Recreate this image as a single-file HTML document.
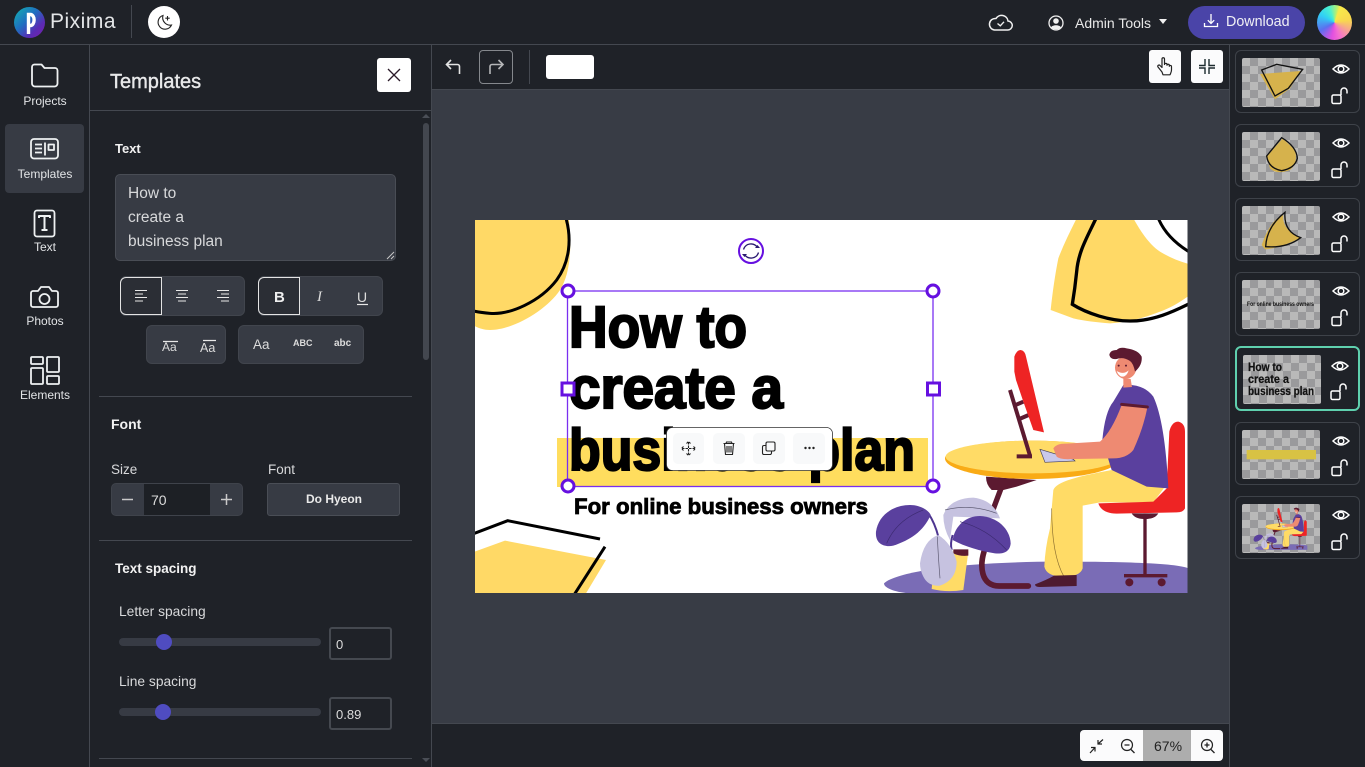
<!DOCTYPE html>
<html lang="en"><head><meta charset="utf-8"><title>Pixima</title>
<style>
*{box-sizing:border-box}
html,body{margin:0;padding:0;width:1365px;height:767px;overflow:hidden;background:#1f2228;font-family:"Liberation Sans",sans-serif;color:#e6e6e6}
.a{position:absolute}
.t{position:absolute;white-space:nowrap;line-height:1}
.l{background:#444850;position:absolute}
.b{font-weight:bold;font-size:13px;color:#f2f2f2}
.n{font-size:12px;color:#e2e4e6;transform:translateX(-50%)}
.g{position:absolute;background:#373b44;border:1px solid #41454d;border-radius:6px}
.act{position:absolute;border:1.5px solid #e4e4e4;background:#2b2e35;border-radius:6px 0 0 6px;border-right-width:1.5px}
.card{position:absolute;left:1235px;width:125px;height:63px;border:1px solid #3e4249;border-radius:6px}
.th{position:absolute;left:6px;top:7px;width:78px;height:49px;border-radius:2px;background-color:#b9b9b9;background-image:linear-gradient(45deg,#9a9a9c 25%,transparent 25%,transparent 75%,#9a9a9c 75%),linear-gradient(45deg,#9a9a9c 25%,transparent 25%,transparent 75%,#9a9a9c 75%);background-size:16px 16px;background-position:0 0,8px 8px}
svg{position:absolute;overflow:visible}
</style></head><body>
<!-- regions -->
<div class="a" style="left:432px;top:90px;width:797px;height:633px;background:#383c45"></div>
<div class="l" style="left:0;top:44px;width:1365px;height:1px"></div>
<div class="l" style="left:89px;top:45px;width:1px;height:722px"></div>
<div class="l" style="left:431px;top:45px;width:1px;height:722px"></div>
<div class="l" style="left:1229px;top:45px;width:1px;height:722px"></div>
<div class="l" style="left:432px;top:89px;width:797px;height:1px"></div>
<div class="l" style="left:432px;top:723px;width:797px;height:1px"></div>
<div class="l" style="left:90px;top:110px;width:341px;height:1px"></div>

<!-- top bar -->
<div class="a" style="left:14px;top:7px;width:31px;height:31px;border-radius:50%;background:linear-gradient(135deg,#12b5b0 0%,#1f6fc0 42%,#5a2bb5 72%,#7b1fa8 100%)"></div>
<svg style="left:0;top:0" width="200" height="44"><path d="M28.500 34V14.500h2a3.600 5.500 0 0 1 0 11h-2" fill="none" stroke="#fff" stroke-width="3.400"/></svg>
<div class="t" style="left:50px;top:11px;font-size:21px;letter-spacing:.5px;color:#e4e6e8">Pixima</div>
<div class="l" style="left:131px;top:5px;width:1px;height:33px"></div>
<div class="a" style="left:148px;top:6px;width:32px;height:32px;border-radius:50%;background:#fff"></div>
<svg style="left:148px;top:6px" width="32" height="32" fill="none" stroke="#222" stroke-width="1.100"><path d="M15 9.500a7 7 0 1 0 8.500 9.500 7.500 7.500 0 0 1-8.500-9.500z"/><path d="M19.500 10v4.500M17.300 12.200h4.400" stroke-width="1.100"/></svg>

<svg style="left:985px;top:10px" width="32" height="26" fill="none" stroke="#f0f0f0" stroke-width="1.500"><path d="M9.500 20h13a4.500 4.500 0 0 0 .5-9A6.500 6.500 0 0 0 11 8.500 5.500 5.500 0 0 0 9.500 20z"/><path d="M12.500 13.500l2.800 2.300 3.700-4" stroke-width="1.400"/></svg>
<svg style="left:1048px;top:15px" width="16" height="16"><circle cx="8" cy="8" r="7" fill="#1f2228" stroke="#f0f0f0" stroke-width="1.300"/><circle cx="8" cy="6" r="2.800" fill="#f0f0f0"/><path d="M3 12.500c1-3 9-3 10 0-2 2.500-8 2.500-10 0z" fill="#f0f0f0"/></svg>
<div class="t" style="left:1075px;top:16px;font-size:14px;color:#e8e8e8">Admin Tools</div>
<svg style="left:1158px;top:19px" width="10" height="6"><path d="M1 0h8L5 5z" fill="#f0f0f0"/></svg>
<div class="a" style="left:1188px;top:6px;width:117px;height:33px;border-radius:17px;background:#4a44a8"></div>
<svg style="left:1203px;top:13px" width="16" height="16" fill="none" stroke="#fff" stroke-width="1.300"><path d="M8 1v9M4.800 7.200L8 10.400l3.200-3.200M1.500 10v3.500h13V10"/></svg>
<div class="t" style="left:1226px;top:15px;font-size:14.300px;color:#f0f0f5">Download</div>
<div class="a" style="left:1317px;top:5px;width:35px;height:35px;border-radius:50%;background:conic-gradient(from 20deg,#f7e94a 0deg,#f8d84e 60deg,#f56fd0 140deg,#e24fe0 170deg,#5b6ff0 220deg,#30d0f5 280deg,#4af0d0 320deg,#b8f070 350deg,#f7e94a 360deg)"></div>

<!-- left rail -->
<div class="a" style="left:5px;top:124px;width:79px;height:69px;border-radius:4px;background:#373b44"></div>
<svg style="left:0;top:45px" width="90" height="360" fill="none" stroke="#eef1f2" stroke-width="1.800" stroke-linejoin="round">
<path d="M32 22a2.500 2.500 0 0 1 2.500-2.500h7l3 3.500h10.500a2.500 2.500 0 0 1 2.500 2.500v13a3 3 0 0 1-3 3H35a3 3 0 0 1-3-3z"/>
<rect x="31" y="94" width="27" height="19.500" rx="3"/><path d="M35 99.500h7M35 103.500h7M35 107.500h7M45 97.500v13"/><rect x="48.500" y="99.500" width="5.500" height="5.500"/>
<rect x="34.500" y="165.500" width="20" height="26" rx="2.500"/><path d="M39 173v-2h11v2M44.500 171v14M41.500 185h6" stroke-width="2"/>
<path d="M31 248a2 2 0 0 1 2-2h5l3-4h8l3 4h4a2 2 0 0 1 2 2v12a2 2 0 0 1-2 2H33a2 2 0 0 1-2-2z"/><circle cx="44.500" cy="254" r="5"/>
<rect x="31" y="312" width="12" height="7" rx="1"/><rect x="31" y="323" width="12" height="16" rx="1"/><rect x="47" y="312" width="12" height="15" rx="1"/><rect x="47" y="331" width="12" height="8" rx="1"/>
</svg>
<div class="t n" style="left:45px;top:95px">Projects</div>
<div class="t n" style="left:45px;top:168px">Templates</div>
<div class="t n" style="left:45px;top:241px">Text</div>
<div class="t n" style="left:45px;top:315px">Photos</div>
<div class="t n" style="left:45px;top:389px">Elements</div>

<!-- panel -->
<div class="t" style="left:110px;top:72px;font-size:20px;color:#e8e9ea;-webkit-text-stroke:.4px #e8e9ea">Templates</div>
<div class="a" style="left:377px;top:58px;width:34px;height:34px;background:#fff;border-radius:3px"></div>
<svg style="left:377px;top:58px" width="34" height="34"><path d="M11 11l12 12M23 11L11 23" stroke="#2a1a28" stroke-width="1.300"/></svg>
<div class="t b" style="left:115px;top:142px">Text</div>
<div class="a" style="left:115px;top:174px;width:281px;height:87px;background:#373b44;border:1px solid #494d55;border-radius:5px"></div>
<div class="t" style="left:128px;top:186px;font-size:15.500px;color:#d8d9db">How to</div>
<div class="t" style="left:128px;top:210px;font-size:15.500px;color:#d8d9db">create a</div>
<div class="t" style="left:128px;top:234px;font-size:15.500px;color:#d8d9db">business plan</div>
<svg style="left:385px;top:250px" width="10" height="10"><path d="M2 9l7-7M6 9l3-3" stroke="#c8c8c8" stroke-width="1"/></svg>
<!-- button groups -->
<div class="g" style="left:120px;top:276px;width:125px;height:40px"></div>
<div class="act" style="left:120px;top:277px;width:42px;height:38px"></div>
<div class="g" style="left:258px;top:276px;width:125px;height:40px"></div>
<div class="act" style="left:258px;top:277px;width:42px;height:38px"></div>
<div class="g" style="left:146px;top:325px;width:80px;height:39px"></div>
<div class="g" style="left:238px;top:325px;width:126px;height:39px"></div>
<svg style="left:0;top:0" width="431" height="400" fill="none" stroke="#e8e8e8" stroke-width="1">
<path d="M135 290.500h12M135 294h8M135 297.500h12M135 301h8"/>
<path d="M176 290.500h12M178 294h8M176 297.500h12M178 301h8"/>
<path d="M217 290.500h12M221 294h8M217 297.500h12M221 301h8"/>
<path d="M357 304.500h11" stroke-width="1.200"/>
<path d="M163 341.500h15M203 340.500h13" stroke-width="1.200"/>
</svg>
<div class="t" style="left:274px;top:290px;font-size:15px;font-weight:bold;color:#eee">B</div>
<div class="t" style="left:317px;top:290px;font-size:15px;font-style:italic;font-family:'Liberation Serif',serif;color:#ddd">I</div>
<div class="t" style="left:357px;top:290px;font-size:14px;color:#ddd">U</div>
<div class="t" style="left:162px;top:341px;font-size:12px;color:#dcdcdc">Aa</div>
<div class="t" style="left:200px;top:342px;font-size:12.500px;color:#dcdcdc">Aa</div>
<div class="t" style="left:253px;top:338px;font-size:13.500px;color:#dcdcdc">Aa</div>
<div class="t" style="left:293px;top:339px;font-size:9px;font-weight:bold;color:#dcdcdc">ABC</div>
<div class="t" style="left:334px;top:339px;font-size:10px;font-weight:bold;color:#dcdcdc">abc</div>

<div class="l" style="left:99px;top:396px;width:313px;height:1px"></div>
<div class="t b" style="left:111px;top:417px;font-size:14px">Font</div>
<div class="t" style="left:111px;top:463px;font-size:13.500px;color:#d8d9db">Size</div>
<div class="t" style="left:268px;top:463px;font-size:13.500px;color:#d8d9db">Font</div>
<div class="a" style="left:111px;top:483px;width:132px;height:33px;background:#373b44;border-radius:5px;border:1px solid #3f434b"></div>
<div class="a" style="left:144px;top:484px;width:66px;height:31px;background:#1d2025"></div>
<svg style="left:111px;top:483px" width="132" height="33"><path d="M11 16.500h11M110 16.500h11M115.500 11v11" stroke="#c9c9c9" stroke-width="1.500" fill="none"/></svg>
<div class="t" style="left:151px;top:493px;font-size:14px;color:#dcdcdc">70</div>
<div class="a" style="left:267px;top:483px;width:133px;height:33px;background:#373b44;border-radius:3px;border:1px solid #4a4e56"></div>
<div class="t" style="left:306px;top:493px;font-size:12px;font-weight:bold;color:#eaeaea">Do Hyeon</div>

<div class="l" style="left:99px;top:540px;width:313px;height:1px"></div>
<div class="t b" style="left:115px;top:562px;font-size:13.500px">Text spacing</div>
<div class="t" style="left:119px;top:605px;font-size:13.800px;color:#d8d9db">Letter spacing</div>
<div class="a" style="left:119px;top:638px;width:202px;height:8px;border-radius:4px;background:#373b44"></div>
<div class="a" style="left:156px;top:634px;width:16px;height:16px;border-radius:50%;background:#4f4cc0"></div>
<div class="a" style="left:329px;top:627px;width:63px;height:33px;border:2px solid #454950;border-radius:3px"></div>
<div class="t" style="left:336px;top:638px;font-size:13px;color:#dcdcdc">0</div>
<div class="t" style="left:119px;top:675px;font-size:13.800px;color:#d8d9db">Line spacing</div>
<div class="a" style="left:119px;top:708px;width:202px;height:8px;border-radius:4px;background:#373b44"></div>
<div class="a" style="left:155px;top:704px;width:16px;height:16px;border-radius:50%;background:#4f4cc0"></div>
<div class="a" style="left:329px;top:697px;width:63px;height:33px;border:2px solid #454950;border-radius:3px"></div>
<div class="t" style="left:336px;top:708px;font-size:13px;color:#dcdcdc">0.89</div>
<div class="l" style="left:99px;top:758px;width:313px;height:1px"></div>
<!-- scrollbar -->
<div class="a" style="left:423px;top:123px;width:6px;height:237px;border-radius:3px;background:#43474f"></div>
<svg style="left:420px;top:112px" width="12" height="655"><path d="M2 6l4-4 4 4zM2 646l4 4 4-4z" fill="#4a4e56"/></svg>

<!-- top toolbar -->
<svg style="left:440px;top:50px" width="80" height="36" fill="none" stroke="#e4e4e4" stroke-width="1.600"><path d="M19.500 24v-7.500a2 2 0 0 0-2-2H7M11 10l-4.500 4.500L11 19"/><g stroke="#b5b6b8"><path d="M50 24v-7.500a2 2 0 0 1 2-2h10M58.500 10l4.500 4.500-4.500 4.500"/></g></svg>
<div class="a" style="left:479px;top:50px;width:34px;height:34px;border:1px solid #85888d;border-radius:4px"></div>
<div class="l" style="left:529px;top:50px;width:1px;height:34px"></div>
<div class="a" style="left:546px;top:55px;width:48px;height:24px;background:#fff;border-radius:3px"></div>
<div class="a" style="left:1149px;top:50px;width:32px;height:33px;background:#fbfbfc;border-radius:3px"></div>
<svg style="left:1149px;top:50px" width="32" height="33" fill="none" stroke="#222" stroke-width="1.200" stroke-linejoin="round"><path d="M13 22l-4-5c-1-1.500 1-2.500 2-1.500l2 2V9c0-1.700 2.500-1.700 2.500 0v5.500c0-1.500 2.500-1.500 2.500 0v.8c0-1.400 2.300-1.400 2.300 0v1c0-1.200 2.200-1.200 2.200.4V20c0 2-.8 3-1.500 4.800h-7z"/></svg>
<div class="a" style="left:1191px;top:50px;width:32px;height:33px;background:#fbfbfc;border-radius:3px"></div>
<svg style="left:1191px;top:50px" width="32" height="33" fill="none" stroke="#1c2b2e" stroke-width="1.400"><path d="M14 9v6.500H8M18 9v6.500h6M14 24v-6h-6M18 24v-6h6"/></svg>

<!-- artboard -->
<svg style="left:0;top:0" width="1365" height="767" viewBox="0 0 1365 767">
<defs><clipPath id="cb"><rect x="475" y="220" width="712.500" height="373"/></clipPath>
<g id="illus">
<path d="M72 1105C110 1070 300 1040 600 1040C800 1040 950 1045 985 1060V1135H150C110 1133 72 1120 72 1105Z" fill="#7a6cb6"/>
<path d="M378 785L530 795L470 815L430 825L395 825Q378 810 378 785Z" fill="#5c1a30"/>
<path d="M425 815L395 895" stroke="#5c1a30" stroke-width="16" fill="none"/>
<path d="M372 1010C360 1050 360 1115 420 1113H505" stroke="#5c1a30" stroke-width="17" fill="none" stroke-linecap="round"/>
<path d="M255 730C255 700 380 677 515 677C660 677 775 700 775 735C775 765 660 792 515 792C380 792 255 765 255 730Z" fill="#f9ab16"/>
<path d="M257 725C257 698 380 677 515 677C660 677 772 698 772 728C772 755 660 775 515 775C380 775 257 752 257 725Z" fill="#ffdb66"/>
<path d="M450 525L510 722M470 724H516M462 572L490 560M478 612L506 600" stroke="#5c1a30" stroke-width="12" fill="none"/>
<path d="M463 425Q470 405 482 405Q495 407 498 425L552 652L520 645L490 560L468 495L463 470Z" fill="#ee2424"/>
<path d="M540 703L640 733L645 738L555 742Z" fill="#c9c8ea" stroke="#44405e" stroke-width="2"/>
<path d="M580 825C590 800 650 785 755 765L915 815L880 862L720 862L668 872L668 1060Q660 1085 610 1085Q560 1085 553 1055Q555 1000 570 940Z" fill="#ffdb66"/>
<path d="M575 880Q575 1020 612 1085" stroke="#8c6f30" stroke-width="2" fill="none"/>
<path d="M525 1108Q560 1095 582 1082L650 1080V1113L540 1116Q525 1116 525 1108Z" fill="#4e1a30"/>
<path d="M715 865L880 860L920 820L928 650Q935 620 955 620Q975 625 975 650V880Q970 892 950 892L770 896Q725 895 715 865Z" fill="#ee2424"/>
<path d="M815 895H895Q885 912 855 912Q825 912 815 895Z" fill="#5c1a30"/>
<path d="M855 905V1082M792 1082H922" stroke="#5c1a30" stroke-width="10" fill="none"/>
<circle cx="808" cy="1102" r="12" fill="#5c1a30"/><circle cx="905" cy="1102" r="12" fill="#5c1a30"/>
<path d="M790 510Q850 505 880 545Q915 620 925 820L860 815L755 765L727 675Q735 590 760 560Z" fill="#5a409e"/>
<path d="M785 570L862 578Q850 640 820 705Q800 730 760 730L640 732Q600 735 590 725L580 700Q590 685 620 686L720 680Q755 650 785 570Z" fill="#ee8a72"/>
<path d="M785 568L862 576" stroke="#5c1a30" stroke-width="9" stroke-linecap="round"/>
<path d="M790 490L812 492L816 516L790 518Z" fill="#ee8a72"/>
<ellipse cx="797" cy="458" rx="32" ry="34" fill="#ee8a72"/>
<path d="M770 468Q790 480 806 466Q800 486 785 485Q775 482 770 468Z" fill="#fff"/>
<circle cx="776" cy="452" r="3" fill="#5c1a30"/><circle cx="798" cy="452" r="3" fill="#5c1a30"/>
<path d="M748 420Q750 405 770 405Q780 395 800 400Q835 405 845 425Q848 450 825 470Q820 445 810 438Q790 425 770 432Q752 435 748 420Z" fill="#5c1a30"/>
<path d="M205 895Q225 925 235 965" stroke="#4d3590" stroke-width="6" fill="none"/>
<path d="M48 950C55 900 100 870 150 870C180 870 205 885 212 900C190 950 150 975 100 992C70 998 45 985 48 950Z" fill="#5a409e"/>
<path d="M80 985Q110 915 190 885" stroke="#3c2a70" stroke-width="2" fill="none"/>
<path d="M250 900Q270 850 340 848Q400 855 420 910L280 905L270 975Q250 940 250 900Z" fill="#c6c2e0"/>
<path d="M255 885Q330 865 410 895" stroke="#5b5870" stroke-width="2" fill="none"/>
<path d="M225 1010H325L310 1125Q260 1133 215 1122Z" fill="#ffdb66"/>
<path d="M280 1003H325V1022Q300 1025 280 1015Z" fill="#5c1a30"/>
<path d="M278 975C285 930 320 903 360 903C410 905 450 940 452 985C450 1010 430 1018 405 1015C360 1008 315 995 278 975Z" fill="#5a409e"/>
<path d="M300 920Q380 940 440 1005" stroke="#3c2a70" stroke-width="2" fill="none"/>
<path d="M278 960Q270 985 275 1005" stroke="#4d3590" stroke-width="6" fill="none"/>
<path d="M180 1045Q190 975 235 960Q275 985 290 1040Q290 1095 240 1112Q205 1115 190 1085Q180 1065 180 1045Z" fill="#c6c2e0"/>
<path d="M232 965Q235 1030 240 1090" stroke="#5b5870" stroke-width="2" fill="none"/>
</g></defs>
<rect x="475" y="220" width="712.500" height="373" fill="#fff"/>
<g clip-path="url(#cb)">
<g transform="translate(470,215) scale(.33333)">
<path d="M0 0H295C305 80 305 170 270 225C230 285 130 345 60 345C35 345 15 335 0 325Z" fill="#ffd966"/>
<path d="M288 10C305 70 300 140 260 195C210 260 120 300 60 295C35 293 15 290 0 285" fill="none" stroke="#000" stroke-width="9"/>
<path d="M0 1015L105 977L408 1035L345 1140H0Z" fill="#ffd966"/>
<path d="M0 960L113 917L390 972" fill="none" stroke="#000" stroke-width="9"/>
<path d="M405 995L312 1140" fill="none" stroke="#000" stroke-width="9"/>
</g>
<g transform="translate(860,215) scale(.33333)">
<path d="M650 10H820C845 55 870 90 900 110C930 128 960 140 990 148V240C960 262 930 280 900 290C850 310 800 322 750 325C710 322 675 318 640 310L572 285C578 230 585 180 595 130C610 90 630 50 650 10Z" fill="#ffd966"/>
<path d="M708 10C680 70 655 110 650 170C645 220 640 250 637 268C680 295 750 318 810 318C880 318 940 290 990 265" fill="none" stroke="#000" stroke-width="10"/>
<path d="M895 10Q920 70 990 112" fill="none" stroke="#000" stroke-width="9"/>
<use href="#illus"/>
</g>
<rect x="557" y="438" width="371" height="49" fill="#ffdd5e"/>
</g>
<g font-family="'Liberation Sans',sans-serif" font-weight="bold" fill="#000" stroke="#000" stroke-width="2.200">
<text x="569" y="347" font-size="58" textLength="178" lengthAdjust="spacingAndGlyphs">How to</text>
<text x="569" y="408" font-size="58" textLength="214" lengthAdjust="spacingAndGlyphs">create a</text>
<text x="569" y="470" font-size="58" textLength="346" lengthAdjust="spacingAndGlyphs">business plan</text>
<text x="574" y="514" font-size="22" stroke-width=".8" textLength="294" lengthAdjust="spacingAndGlyphs">For online business owners</text>
</g>
<rect x="567.500" y="291" width="365.500" height="195.500" fill="none" stroke="#7a2ff0" stroke-width="1.300"/>
<g fill="#fff" stroke="#6610e0" stroke-width="3">
<circle cx="568" cy="291" r="6"/><circle cx="933" cy="291" r="6"/><circle cx="568" cy="486" r="6"/><circle cx="933" cy="486" r="6"/>
<rect x="562" y="383" width="12" height="12"/><rect x="927.500" y="383" width="12" height="12"/>
</g>
<circle cx="751" cy="251" r="12" fill="#fff" stroke="#6610e0" stroke-width="2"/>
<path d="M743.500 249.500a7.800 7.800 0 0 1 14-2M758.500 252.500a7.800 7.800 0 0 1-14 2" fill="none" stroke="#2a1a70" stroke-width="1.300"/>
<path d="M755 248h5l-2.500-3zM747 254h-5l2.500 3z" fill="#2a1a70"/>
<!-- floating toolbar -->
<rect x="666.500" y="427.500" width="166" height="43" rx="6" fill="#fff" stroke="#333" stroke-width=".8"/>
<g fill="#f8f9fa"><rect x="673" y="433" width="31" height="31" rx="5"/><rect x="713" y="433" width="32" height="31" rx="5"/><rect x="753" y="433" width="32" height="31" rx="5"/><rect x="793" y="433" width="32" height="31" rx="5"/></g>
<g fill="none" stroke="#222" stroke-width="1.100">
<path d="M688.500 442v12.500M682 448.500h13M686.500 443.500l2-2 2 2M686.500 453.500l2 2 2-2M683.500 446.500l-2 2 2 2M693.500 446.500l2 2-2 2" stroke-dasharray="2.500 1"/>
<path d="M723.500 443.500h11M726 443.500l.5-1.500h5l.5 1.500M724.500 443.500l1 11h7l1-11M727 446v6.500M729 446v6.500M731 446v6.500"/>
<rect x="766" y="442" width="9" height="9" rx="1.500"/><path d="M766 445.500h-2a1.500 1.500 0 0 0-1.500 1.500v6a1.500 1.500 0 0 0 1.500 1.500h6a1.500 1.500 0 0 0 1.500-1.500v-2"/>
</g>
<g fill="#222"><circle cx="805.500" cy="448" r="1.200"/><circle cx="809.500" cy="448" r="1.200"/><circle cx="813.500" cy="448" r="1.200"/></g>
</svg>

<!-- zoom widget -->
<div class="a" style="left:1080px;top:730px;width:143px;height:31px;background:#fbfbfc;border-radius:4px"></div>
<div class="a" style="left:1143px;top:730px;width:48px;height:31px;background:#adadad"></div>
<div class="t" style="left:1154px;top:739px;font-size:14px;color:#222">67%</div>
<svg style="left:1080px;top:730px" width="143" height="31" fill="none" stroke="#222" stroke-width="1.200"><path d="M10 23l5-5.500M11 17.500h4v4M23 9.500l-5 4.500M18 10v4h4"/><circle cx="47" cy="15" r="5.500"/><path d="M51 19.500l3.500 3.500M44.500 15h5" stroke-width="1.300"/><circle cx="127" cy="15" r="5.500"/><path d="M131 19.500l3.500 3.500M124.500 15h5M127 12.500v5" stroke-width="1.300"/></svg>

<!-- layers -->
<div class="card" style="top:50px"><div class="th"></div></div>
<div class="card" style="top:124px"><div class="th"></div></div>
<div class="card" style="top:198px"><div class="th"></div></div>
<div class="card" style="top:272px;height:64px"><div class="th"></div></div>
<div class="card" style="top:346px;height:65px;border:2px solid #5fd0ae"><div class="th" style="left:6px;top:7px"></div></div>
<div class="card" style="top:422px"><div class="th"></div></div>
<div class="card" style="top:496px"><div class="th"></div></div>
<svg style="left:0;top:0" width="1365" height="767" viewBox="0 0 1365 767">
<defs>
<g id="eye" fill="none" stroke="#fff"><path d="M-8 0Q0-8 8 0Q0 8-8 0Z" stroke-width="1.500"/><circle r="2.800" stroke-width="1.500"/></g>
<g id="lock" fill="none" stroke="#fff" stroke-width="1.500"><rect x="-7" y="-1" width="9" height="8.500" rx="1.500"/><path d="M2 -1V-5a3 3 0 0 1 6 0v2.500"/></g>
<clipPath id="c7"><rect x="1242" y="497" width="78" height="58"/></clipPath>
</defs>
<g transform="translate(960,0) scale(.33333)">
<path d="M900 222L1022 213L990 265L945 298Z" fill="#d6b24c"/>
<path d="M905 210L950 193L1028 208L985 265L945 288Z" fill="none" stroke="#111" stroke-width="4"/>
<path d="M920 470L968 415L1005 450Q1015 490 990 510Q950 525 930 505Z" fill="#d6b24c"/>
<path d="M920 468L965 413Q1010 440 1012 475Q1005 505 965 512Q925 505 920 468Z" fill="none" stroke="#111" stroke-width="4"/>
</g>
<g transform="translate(1230,190) scale(.33333)">
<path d="M95 165Q120 90 160 75Q155 120 212 143Q150 175 105 178Z" fill="#d6b24c"/>
<path d="M165 67Q110 110 107 170Q170 175 212 143Q160 125 165 67Z" fill="none" stroke="#111" stroke-width="4"/>
<rect x="50" y="780" width="208" height="28" fill="#d8c244"/>
</g>
<g font-family="'Liberation Sans',sans-serif" font-weight="bold" fill="#111">
<text x="1247" y="306" font-size="6.500" textLength="67" lengthAdjust="spacingAndGlyphs">For online business owners</text>
<g font-size="11.500" stroke="#111" stroke-width=".2">
<text x="1248" y="371" textLength="34" lengthAdjust="spacingAndGlyphs">How to</text>
<text x="1248" y="383" textLength="41" lengthAdjust="spacingAndGlyphs">create a</text>
<text x="1248" y="395" textLength="66" lengthAdjust="spacingAndGlyphs">business plan</text>
</g></g>
<g clip-path="url(#c7)"><g transform="translate(1255,508) scale(.172) translate(-884,-350) translate(860,215) scale(.33333)"><use href="#illus"/></g></g>
<use href="#eye" x="1341" y="69"/><use href="#lock" x="1339" y="96"/>
<use href="#eye" x="1341" y="143"/><use href="#lock" x="1339" y="170"/>
<use href="#eye" x="1341" y="217"/><use href="#lock" x="1339" y="244"/>
<use href="#eye" x="1341" y="291"/><use href="#lock" x="1339" y="318"/>
<use href="#eye" x="1340" y="366"/><use href="#lock" x="1338" y="392"/>
<use href="#eye" x="1341" y="441"/><use href="#lock" x="1339" y="468"/>
<use href="#eye" x="1341" y="515"/><use href="#lock" x="1339" y="542"/>
</svg>
</body></html>
